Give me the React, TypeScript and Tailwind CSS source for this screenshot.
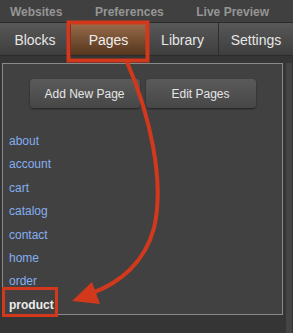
import React from "react";

const pages = ["about", "account", "cart", "catalog", "contact", "home", "order"];

const tabs = [
  { name: "Blocks", w: "w-[70px]" },
  { name: "Pages", w: "w-[76px]", active: true },
  { name: "Library", w: "w-[72px]" },
  { name: "Settings", w: "w-[75px]" },
];

export default function App() {
  return (
    <div className="relative w-[293px] h-[333px] overflow-hidden bg-[#353535] font-['Liberation_Sans',Arial,sans-serif]">
      {/* top menu */}
      <div className="flex h-[23px] items-center justify-between pl-[10px] pr-[24px] pt-[2px] bg-[#404040] border-b border-[#2a2a2a] text-[12px] font-bold text-[#959595]">
        <span>Websites</span>
        <span>Preferences</span>
        <span>Live Preview</span>
      </div>

      {/* tabs */}
      <div className="flex h-[33px] bg-gradient-to-b from-[#585858] to-[#3e3e3e] border-b border-[#2a2a2a]">
        {tabs.map((t, i) => (
          <div
            key={t.name}
            className={`${t.w} flex items-center justify-center pt-[2px] text-[14px] ${
              t.active
                ? "bg-gradient-to-b from-[#9a6d4c] to-[#55361d] text-[#eeeeee]"
                : "text-[#e6e6e6]"
            } ${i > 0 ? "border-l border-[#2e2e2e]" : ""}`}
          >
            {t.name}
          </div>
        ))}
      </div>

      {/* body */}
      <div className="flex pt-[7px]">
        <div className="ml-[2px] w-[281px] h-[252px] border border-[#8a8a8a] bg-[#414141]">
          <div className="flex justify-center gap-[6px] pt-[15px]">
            <button className="w-[110px] h-[29px] rounded-[4px] bg-gradient-to-b from-[#5a5a5a] to-[#474747] shadow-[0_1px_2px_rgba(0,0,0,0.5)] text-[12px] text-[#e6e6e6]">
              Add New Page
            </button>
            <button className="w-[110px] h-[29px] rounded-[4px] bg-gradient-to-b from-[#5a5a5a] to-[#474747] shadow-[0_1px_2px_rgba(0,0,0,0.5)] text-[12px] text-[#e6e6e6]">
              Edit Pages
            </button>
          </div>
          <ul className="mt-[22px] pl-[6px] text-[12px] leading-[23.4px]">
            {pages.map((p) => (
              <li key={p} className="text-[#84aef0]">
                {p}
              </li>
            ))}
            <li className="font-bold text-[#ececec]">product</li>
          </ul>
        </div>
        <div className="ml-[3px] w-[6px] h-[270px] bg-[#444444]" />
      </div>

      {/* annotation overlay */}
      <svg className="absolute left-0 top-0" width="293" height="333" viewBox="0 0 293 333">
        <rect x="68.5" y="22.5" width="79" height="38" fill="none" stroke="#d2391c" strokeWidth="4" />
        <rect x="3.5" y="288.5" width="53" height="27" fill="none" stroke="#d2391c" strokeWidth="3" />
        <path
          d="M127 62 C150 115 165 182 154 228 C145 262 120 283 92 293"
          fill="none"
          stroke="#d2391c"
          strokeWidth="4"
        />
        <polygon points="72,301 92,282 100,304" fill="#d2391c" />
      </svg>
    </div>
  );
}
